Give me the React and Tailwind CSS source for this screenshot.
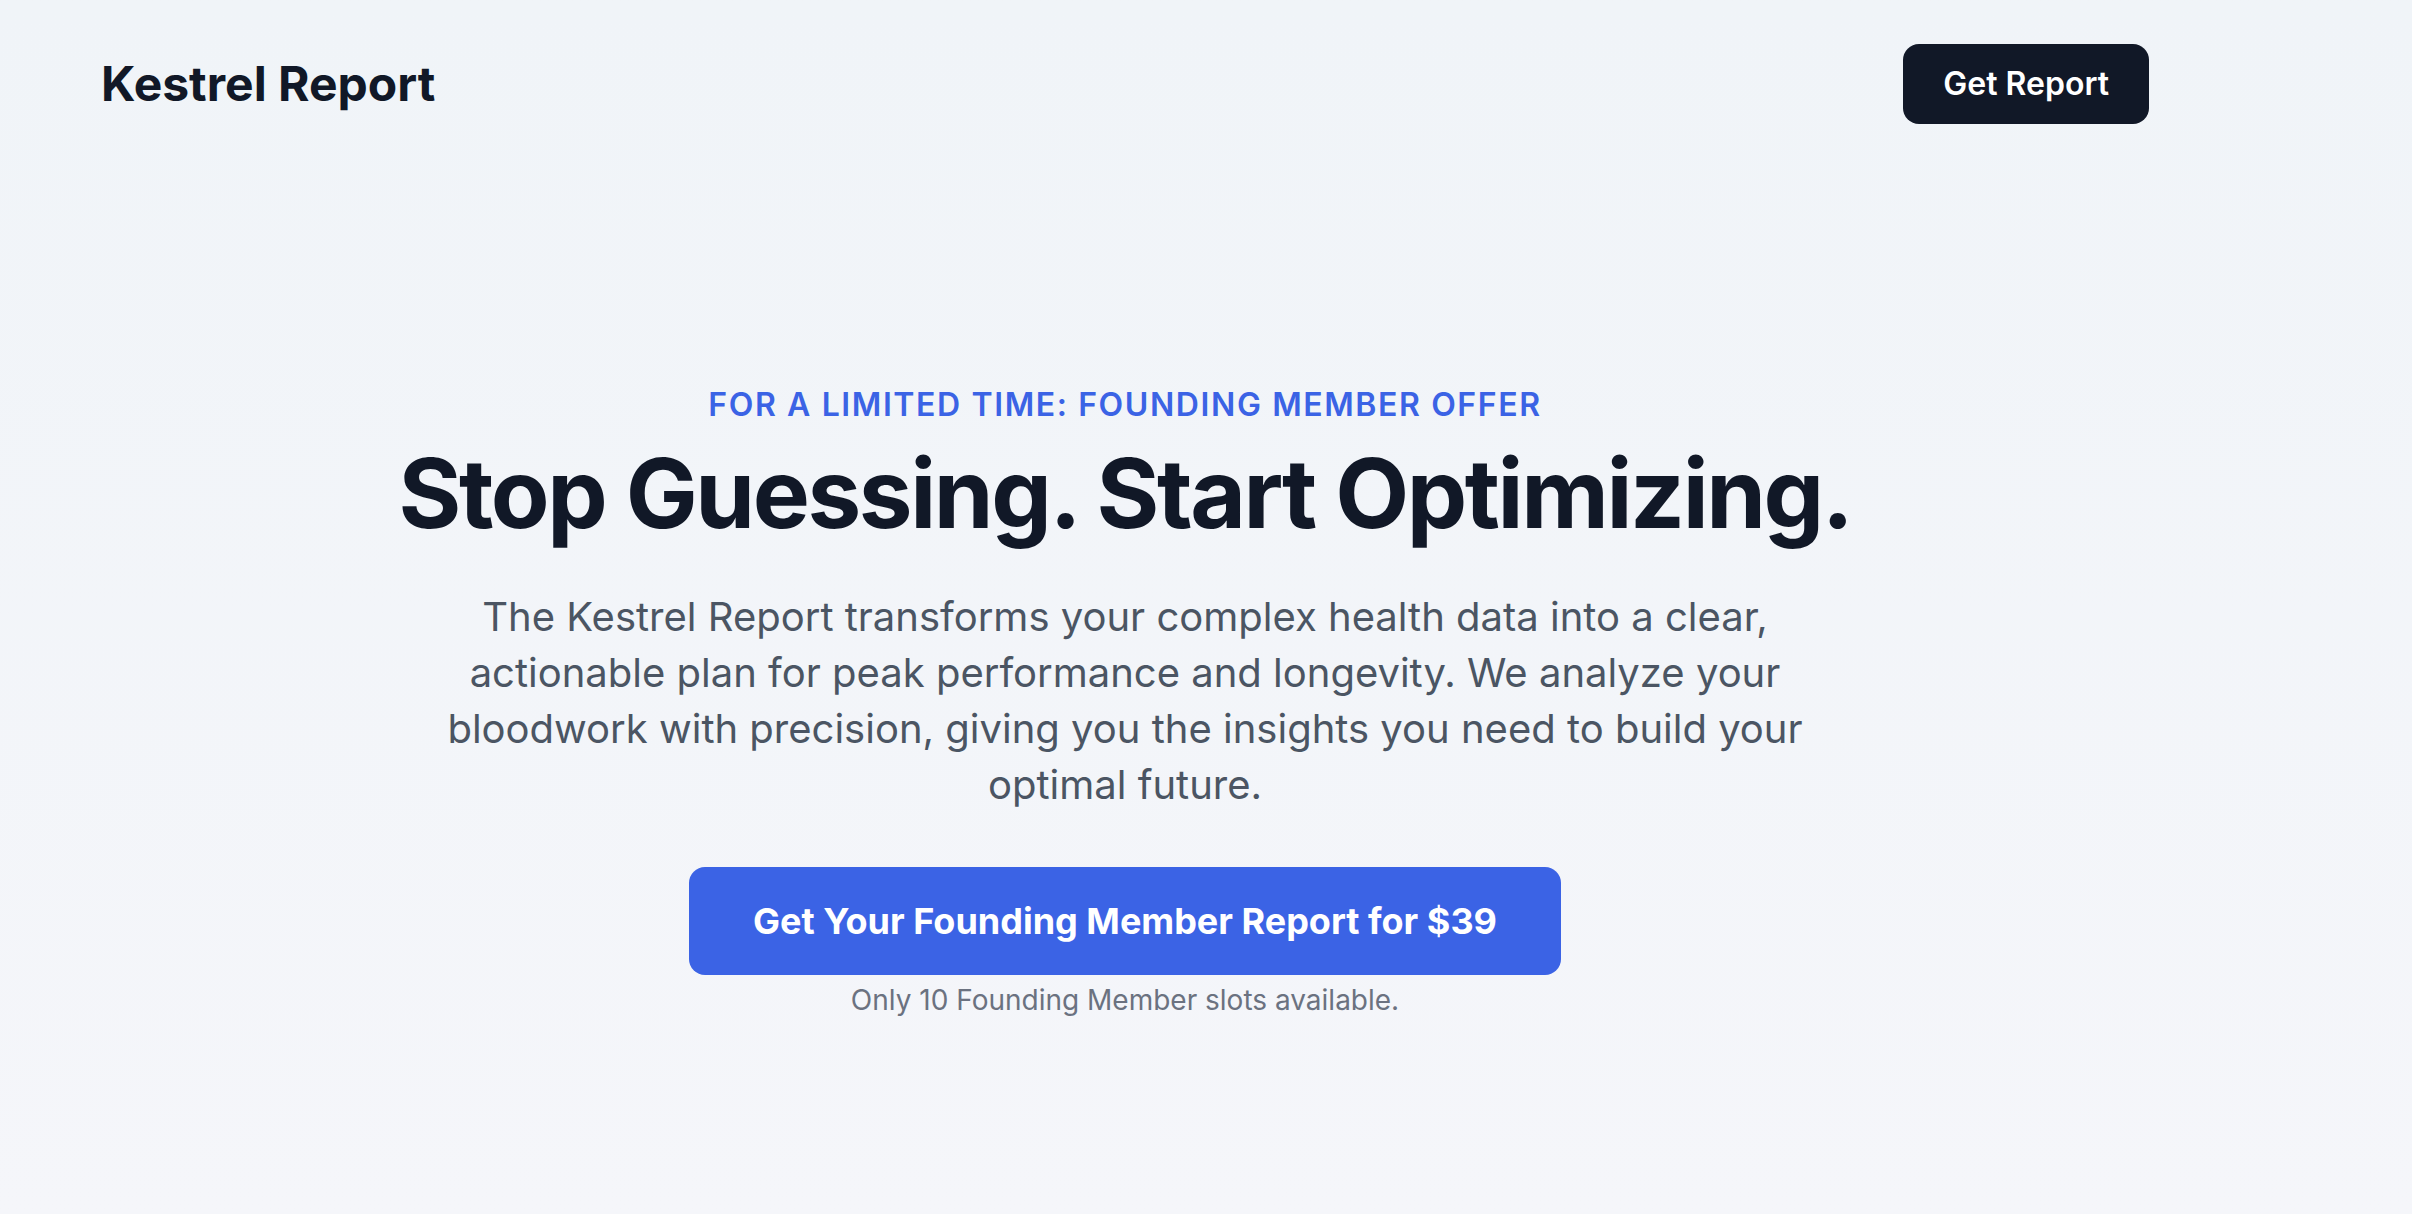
export default function App() {
  return (
    <div
      className="min-h-screen w-full bg-linear-to-b from-[#f0f4f8] to-[#f5f6fa] text-[#111827]"
      style={{ fontFamily: 'Inter, "Noto Sans", sans-serif' }}
    >
      <div className="w-[2250px]">
        <header className="flex items-center justify-between px-[101px] pt-[44px]">
          <div className="text-[48px] leading-[64px] font-bold">Kestrel Report</div>
          <button className="rounded-[16px] bg-[#111827] px-[40px] py-[16px] text-[32px] leading-[48px] font-semibold text-white">
            Get Report
          </button>
        </header>

        <section className="flex flex-col items-center pt-[257px] text-center">
          <p className="text-[32px] leading-[48px] font-semibold uppercase tracking-wider text-[#3b63e5]">
            For a limited time: Founding Member Offer
          </p>
          <h1 className="mt-[16px] text-[96px] leading-none font-bold tracking-tight text-[#111827]">
            Stop Guessing. Start Optimizing.
          </h1>
          <p className="mt-[48px] max-w-[1380px] text-[40px] leading-[56px] text-[#4b5563]">
            The Kestrel Report transforms your complex health data into a clear, actionable plan for peak
            performance and longevity. We analyze your bloodwork with precision, giving you the insights you need
            to build your optimal future.
          </p>
          <button className="mt-[54px] rounded-[16px] bg-[#3b63e5] px-[64px] py-[26px] text-[36px] leading-[56px] font-bold text-white">
            Get Your Founding Member Report for $39
          </button>
          <p className="mt-[5px] text-[28px] leading-[40px] text-[#6b7280]">
            Only 10 Founding Member slots available.
          </p>
        </section>
      </div>
    </div>
  );
}
